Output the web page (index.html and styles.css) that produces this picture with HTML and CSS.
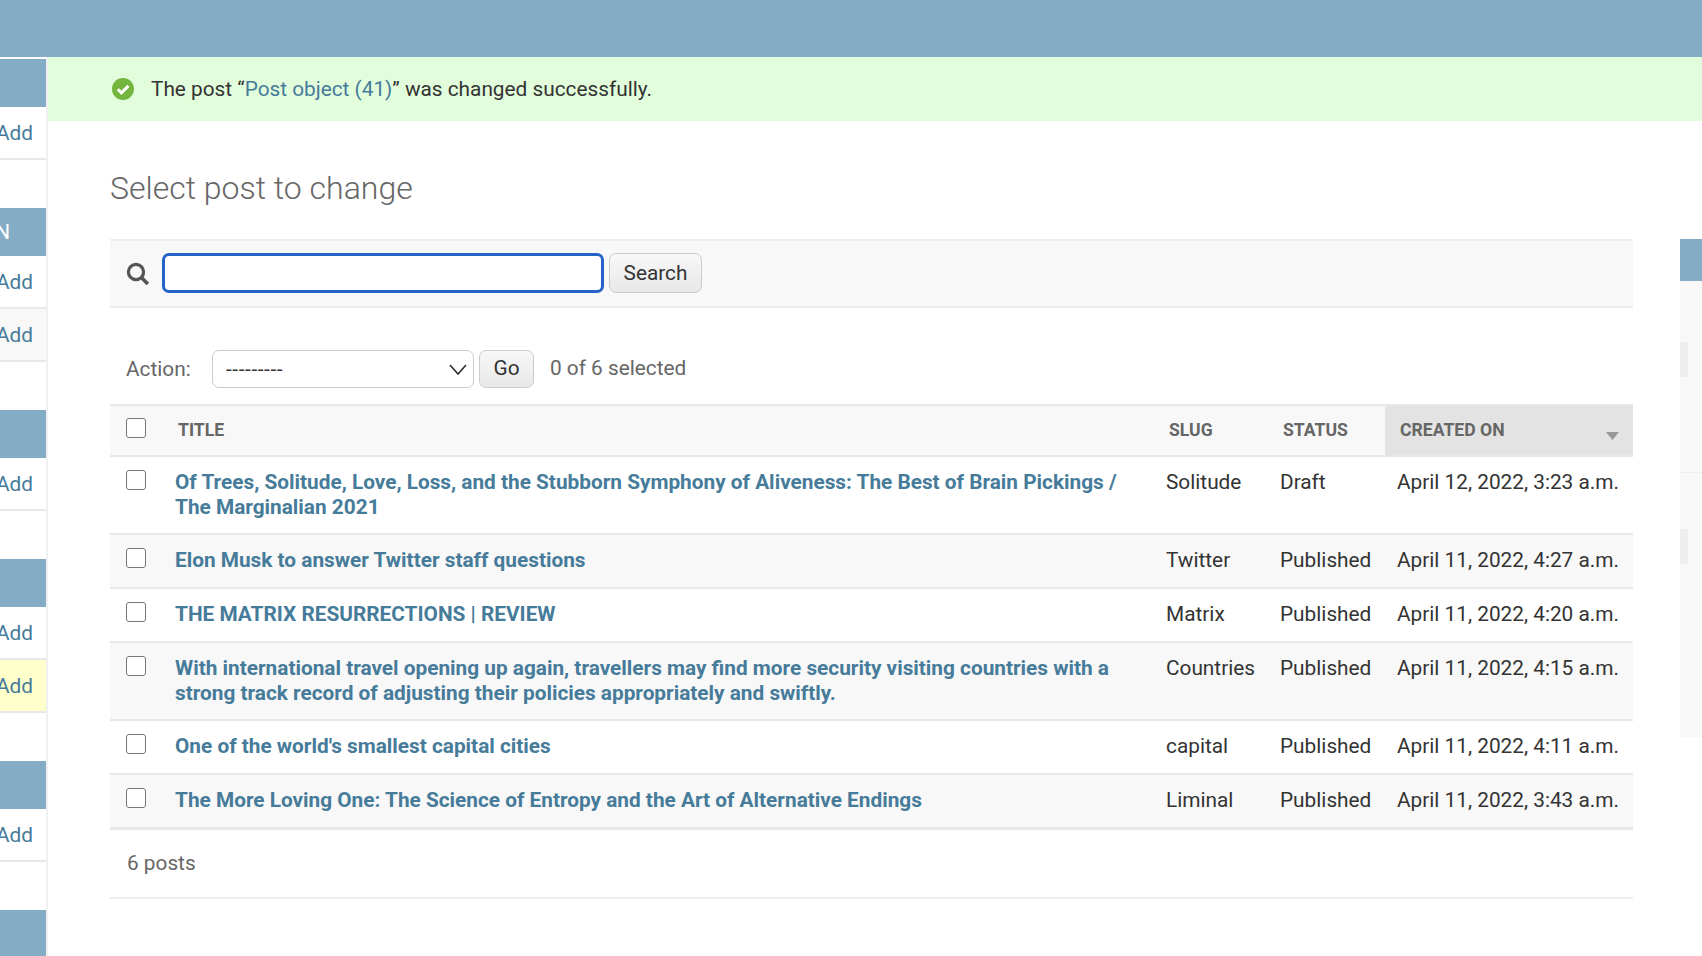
FILE: index.html
```html
<!DOCTYPE html>
<html lang="en">

<head>
    <title>Select post to change</title>
    <link rel="stylesheet" href="styles.css">
</head>

<body>
    <div class="header"></div>

    <div class="main">
        <div class="sidebar">
            <div class="app">
                <div class="caption"></div>
                <div class="add-row"><a href="#">Add</a></div>
            </div>
            <div class="app">
                <div class="caption">N</div>
                <div class="add-row"><a href="#">Add</a></div>
                <div class="add-row even"><a href="#">Add</a></div>
            </div>
            <div class="app">
                <div class="caption"></div>
                <div class="add-row"><a href="#">Add</a></div>
            </div>
            <div class="app">
                <div class="caption"></div>
                <div class="add-row"><a href="#">Add</a></div>
                <div class="add-row current"><a href="#">Add</a></div>
            </div>
            <div class="app">
                <div class="caption"></div>
                <div class="add-row"><a href="#">Add</a></div>
            </div>
            <div class="app">
                <div class="caption"></div>
            </div>
        </div>

        <div class="content">
            <div class="message">
                <svg class="message-icon" width="22" height="22" viewBox="0 0 22 22">
                    <circle cx="11" cy="11" r="11" fill="#74b53e" />
                    <path d="M5.8 11.3l3.6 3.6 7-7" fill="none" stroke="#fff" stroke-width="3" />
                </svg>
                <span>The post “<a href="#">Post object (41)</a>” was changed successfully.</span>
            </div>

            <div class="page">
                <h1>Select post to change</h1>

                <div class="changelist">
                    <div class="list-col">
                        <form class="toolbar">
                            <svg class="search-icon" width="24" height="24" viewBox="0 0 24 24">
                                <circle cx="10" cy="10" r="7.6" fill="none" stroke="#555" stroke-width="3.2" />
                                <path d="M15.4 15.4l6.4 6.6" fill="none" stroke="#555" stroke-width="3.6" />
                            </svg>
                            <input class="search-input" type="text">
                            <button class="btn search-btn" type="button">Search</button>
                        </form>

                        <div class="actions">
                            <label class="action-label">Action:</label>
                            <div class="select-wrap">
                                <select class="action-select">
                                    <option>---------</option>
                                </select>
                                <svg class="chevron" width="18" height="11" viewBox="0 0 18 11">
                                    <path d="M1 1l8 9 8-9" fill="none" stroke="#333" stroke-width="1.7" />
                                </svg>
                            </div>
                            <button class="btn go-btn" type="button">Go</button>
                            <span class="counter">0 of 6 selected</span>
                        </div>

                        <table class="result-list">
                            <colgroup>
                                <col class="col-check">
                                <col class="col-title">
                                <col class="col-slug">
                                <col class="col-status">
                                <col class="col-created">
                            </colgroup>
                            <thead>
                                <tr>
                                    <th class="check-cell"><input class="check" type="checkbox"></th>
                                    <th>Title</th>
                                    <th>Slug</th>
                                    <th>Status</th>
                                    <th class="sorted">
                                        <div class="sorted-inner">
                                            <span>Created on</span>
                                            <svg class="sort-arrow" width="13" height="8" viewBox="0 0 13 8">
                                                <path d="M0 0h13L6.500 8z" fill="#999" />
                                            </svg>
                                        </div>
                                    </th>
                                </tr>
                            </thead>
                            <tbody>
                                <tr>
                                    <td class="check-cell"><input class="check" type="checkbox"></td>
                                    <td><a href="#">Of Trees, Solitude, Love, Loss, and the Stubborn Symphony of Aliveness: The Best of Brain Pickings / The Marginalian 2021</a></td>
                                    <td>Solitude</td>
                                    <td>Draft</td>
                                    <td>April 12, 2022, 3:23 a.m.</td>
                                </tr>
                                <tr>
                                    <td class="check-cell"><input class="check" type="checkbox"></td>
                                    <td><a href="#">Elon Musk to answer Twitter staff questions</a></td>
                                    <td>Twitter</td>
                                    <td>Published</td>
                                    <td>April 11, 2022, 4:27 a.m.</td>
                                </tr>
                                <tr>
                                    <td class="check-cell"><input class="check" type="checkbox"></td>
                                    <td><a href="#">THE MATRIX RESURRECTIONS | REVIEW</a></td>
                                    <td>Matrix</td>
                                    <td>Published</td>
                                    <td>April 11, 2022, 4:20 a.m.</td>
                                </tr>
                                <tr>
                                    <td class="check-cell"><input class="check" type="checkbox"></td>
                                    <td><a href="#">With international travel opening up again, travellers may find more security visiting countries with a strong track record of adjusting their policies appropriately and swiftly.</a></td>
                                    <td>Countries</td>
                                    <td>Published</td>
                                    <td>April 11, 2022, 4:15 a.m.</td>
                                </tr>
                                <tr>
                                    <td class="check-cell"><input class="check" type="checkbox"></td>
                                    <td><a href="#">One of the world's smallest capital cities</a></td>
                                    <td>capital</td>
                                    <td>Published</td>
                                    <td>April 11, 2022, 4:11 a.m.</td>
                                </tr>
                                <tr>
                                    <td class="check-cell"><input class="check" type="checkbox"></td>
                                    <td><a href="#">The More Loving One: The Science of Entropy and the Art of Alternative Endings</a></td>
                                    <td>Liminal</td>
                                    <td>Published</td>
                                    <td>April 11, 2022, 3:43 a.m.</td>
                                </tr>
                            </tbody>
                        </table>

                        <p class="paginator">6 posts</p>
                    </div>

                    <div class="filter">
                        <div class="filter-title"></div>
                        <div class="filter-group first">
                            <div class="filter-chip"></div>
                        </div>
                        <div class="filter-group">
                            <div class="filter-chip"></div>
                        </div>
                    </div>
                </div>
            </div>
        </div>
    </div>
</body>

</html>
```

FILE: styles.css
```css
html,
body {
    height: 100%;
    margin: 0;
}

body {
    font-family: Roboto, sans-serif;
    font-size: 20.8px;
    color: #333;
    background-color: #fff;
    overflow: hidden;
}

a {
    color: #467b9a;
    text-decoration: none;
}

.header {
    height: 57px;
    background-color: #85acc5;
}

.main {
    display: flex;
    height: 899px;
}

/* sidebar */

.sidebar {
    width: 46px;
    flex-shrink: 0;
    padding-top: 2px;
    border-right: 2px solid #f0f0f0;
    display: flex;
    flex-direction: column;
    gap: 48px;
    overflow: hidden;
}

.caption {
    height: 48px;
    background-color: #85acc5;
    color: #fff;
    display: flex;
    align-items: center;
    justify-content: flex-end;
    padding-right: 36px;
}

.add-row {
    box-sizing: border-box;
    height: 53px;
    border-bottom: 2px solid #e8e8e8;
    display: flex;
    align-items: center;
    justify-content: flex-end;
    padding-right: 13px;
}

.add-row.even {
    background-color: #f8f8f8;
}

.add-row.current {
    background-color: #ffffcc;
}

/* content */

.content {
    flex-grow: 1;
    min-width: 0;
}

.message {
    height: 64px;
    box-sizing: border-box;
    padding-left: 64px;
    background-color: #e2fddc;
    display: flex;
    align-items: center;
    gap: 17px;
}

.message-icon {
    flex-shrink: 0;
}

.page {
    padding: 0 0 0 62px;
}

h1 {
    margin: 0;
    padding-top: 47px;
    height: 71px;
    font-size: 32px;
    line-height: 40px;
    font-weight: 300;
    color: #666;
}

.changelist {
    display: flex;
    gap: 47px;
}

.list-col {
    width: 1523px;
    flex-shrink: 0;
}

.toolbar {
    height: 69px;
    box-sizing: border-box;
    border-top: 2px solid #eee;
    border-bottom: 2px solid #eee;
    background-color: #f8f8f8;
    padding-left: 16px;
    padding-bottom: 1px;
    display: flex;
    align-items: center;
}

.search-icon {
    flex-shrink: 0;
    margin-top: 2px;
    margin-right: 12px;
}

.search-input {
    width: 442px;
    height: 40px;
    box-sizing: border-box;
    border: 3px solid #2563c9;
    border-radius: 7px;
    background-color: #fff;
    outline: none;
}

.btn {
    height: 40px;
    box-sizing: border-box;
    border: 1px solid #ccc;
    border-radius: 7px;
    background: linear-gradient(#f8f8f8, #e8e8e8);
    font-family: Roboto, sans-serif;
    font-size: 20.8px;
    color: #333;
}

.search-btn {
    width: 93px;
    margin-left: 5px;
}

.actions {
    height: 96px;
    box-sizing: border-box;
    padding: 42px 0 16px 16px;
    display: flex;
    align-items: center;
}

.action-label {
    color: #666;
    width: 86px;
    flex-shrink: 0;
}

.select-wrap {
    position: relative;
}

.action-select {
    display: block;
    width: 262px;
    height: 38px;
    box-sizing: border-box;
    padding-left: 13px;
    appearance: none;
    border: 1px solid #ccc;
    border-radius: 7px;
    background-color: #fff;
    font-family: Roboto, sans-serif;
    font-size: 20.8px;
    letter-spacing: 0.6px;
    color: #333;
}

.chevron {
    position: absolute;
    top: 14px;
    right: 7px;
    pointer-events: none;
}

.go-btn {
    width: 55px;
    height: 38px;
    margin-left: 5px;
    padding-bottom: 3px;
}

.counter {
    margin-left: 16px;
    margin-bottom: 2px;
    color: #666;
}

/* results table */

.result-list {
    width: 100%;
    table-layout: fixed;
    border-collapse: separate;
    border-spacing: 0;
}

.col-check {
    width: 53px;
}

.col-slug {
    width: 114px;
}

.col-status {
    width: 117px;
}

.col-created {
    width: 248px;
}

th {
    height: 53px;
    box-sizing: border-box;
    padding: 0 15px 2px;
    background-color: #f8f8f8;
    border-top: 2px solid #e8e8e8;
    border-bottom: 2px solid #e8e8e8;
    font-size: 17.6px;
    font-weight: 700;
    color: #666;
    text-align: left;
    text-transform: uppercase;
}

th.sorted {
    background-color: #e3e3e3;
}

.sorted-inner {
    display: flex;
    justify-content: space-between;
    align-items: center;
}

.sort-arrow {
    margin-top: 12px;
    margin-right: -1px;
}

td {
    padding: 13px 12px 14.2px;
    border-bottom: 2px solid #e8e8e8;
    line-height: 24.6px;
    vertical-align: top;
    color: #333;
}

td a {
    font-weight: 700;
}

tbody tr:nth-child(even) td {
    background-color: #f8f8f8;
}

tbody tr:last-child td {
    border-bottom-width: 3px;
}

.check-cell {
    padding: 13px 0 0 16px;
    vertical-align: top;
}

th.check-cell {
    padding: 0 0 5px 16px;
    vertical-align: middle;
}

.check {
    display: block;
    width: 20px;
    height: 20px;
    margin: 0;
    appearance: none;
    border: 1.5px solid #767676;
    border-radius: 3px;
    background-color: #fff;
}

.paginator {
    margin: 0;
    height: 69px;
    box-sizing: border-box;
    padding-left: 17px;
    display: flex;
    align-items: center;
    border-bottom: 2px solid #eee;
    color: #666;
}

/* filter panel, cut off by the window */

.filter {
    width: 200px;
    flex-shrink: 0;
    height: 498px;
    background-color: #f8f8f8;
}

.filter-title {
    height: 42px;
    background-color: #85acc5;
}

.filter-group {
    padding-top: 56px;
}

.filter-group.first {
    height: 192px;
    box-sizing: border-box;
    padding-top: 61px;
    border-bottom: 1px solid #eee;
}

.filter-chip {
    width: 8px;
    height: 35px;
    background-color: #eee;
}
```
